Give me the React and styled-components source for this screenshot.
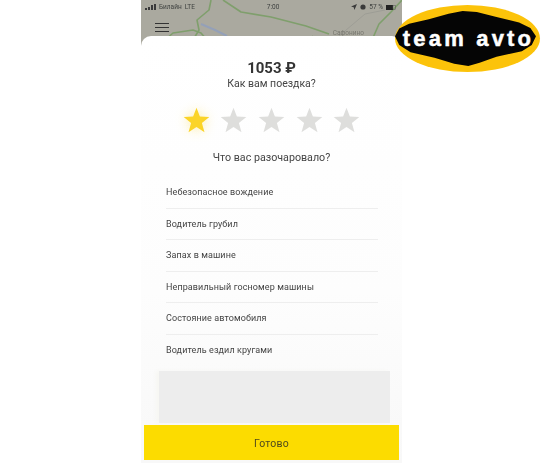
import React from 'react';
import styled, { createGlobalStyle } from 'styled-components';

const GlobalStyle = createGlobalStyle`
  html, body {
    margin: 0;
    padding: 0;
    background: #fff;
  }
  body {
    font-family: "Roboto", "Liberation Sans", sans-serif;
  }
`;

const Page = styled.div`
  position: relative;
  width: 543px;
  height: 463px;
  overflow: hidden;
  background: #fff;
`;

const Phone = styled.div`
  position: relative;
  margin-left: 141px;
  width: 261px;
  height: 463px;
  background: #aaa99f;
  overflow: hidden;
  filter: blur(0.35px);
`;

const MapLayer = styled.svg`
  position: absolute;
  top: 0;
  left: 0;
`;

const StatusBar = styled.div`
  position: relative;
  height: 14px;
  padding: 0 6px 0 4px;
  display: flex;
  align-items: center;
  justify-content: space-between;
  font-size: 6.5px;
  color: #3f4240;
`;

const StatusGroup = styled.div`
  display: flex;
  align-items: center;
  gap: 3px;
`;

const MenuRow = styled.div`
  position: relative;
  height: 22px;
  padding: 4px 0 0 14px;
  box-sizing: border-box;
  display: flex;
  align-items: flex-start;
  justify-content: space-between;
`;

const Burger = styled.div`
  margin-top: 5px;
  width: 14px;
  height: 9px;
  border-top: 1px solid #333;
  border-bottom: 1px solid #333;
  box-sizing: border-box;
  position: relative;
  &::after {
    content: '';
    position: absolute;
    left: 0;
    right: 0;
    top: 3px;
    height: 1px;
    background: #333;
  }
`;

const PlaceName = styled.span`
  margin: 12px 38px 0 0;
  font-size: 6.5px;
  line-height: 7px;
  color: #77776f;
`;

const Sheet = styled.div`
  position: relative;
  height: 427px;
  background: linear-gradient(#fff 0, #fdfdfd 60%, #f8f8f8 100%);
  border-radius: 10px 10px 0 0;
  display: flex;
  flex-direction: column;
  align-items: center;
`;

const Price = styled.div`
  margin-top: 23px;
  font-size: 15px;
  line-height: 18px;
  font-weight: 700;
  color: #333;
`;

const Question = styled.div`
  font-size: 10.5px;
  line-height: 13px;
  color: #444;
`;

const Stars = styled.div`
  margin-top: 16px;
  display: flex;
  gap: 11.6px;
`;

const StarIcon = styled.svg`
  width: 27px;
  height: 27px;
  margin: -0.5px;
  display: block;
  filter: ${({ $on }) => ($on ? 'drop-shadow(0 0 6px rgba(250, 215, 60, 0.45))' : 'none')};
  fill: ${({ $on }) => ($on ? '#fbd428' : '#dededc')};
`;

const Subtitle = styled.div`
  margin-top: 19px;
  font-size: 10.7px;
  line-height: 13px;
  color: #444;
`;

const List = styled.div`
  margin-top: 13px;
  width: 212px;
  margin-left: 1px;
`;

const Row = styled.div`
  height: 31.5px;
  box-sizing: border-box;
  display: flex;
  align-items: center;
  font-size: 9px;
  letter-spacing: 0.1px;
  color: #444;
  border-bottom: ${({ $last }) => ($last ? 'none' : '1px solid #eeeeee')};
`;

const CommentBox = styled.div`
  margin: 5px 0 0 6px;
  width: 231px;
  height: 52px;
  flex-shrink: 0;
  background: #ededed;
  box-shadow: -3px 0 4px #f6f6f2;
`;

const DoneButton = styled.button`
  margin-top: 2px;
  width: 255px;
  height: 35px;
  flex-shrink: 0;
  border: 0;
  padding: 2px 0 0;
  background: #fcdc00;
  font-family: inherit;
  font-size: 10.5px;
  letter-spacing: 0.2px;
  color: #4f4a1c;
`;

const Logo = styled.div`
  position: absolute;
  left: 395px;
  top: 5px;
  width: 145px;
  height: 67px;
  border-radius: 50%;
  background: #fcc30a;
`;

const LogoBadge = styled.div`
  position: absolute;
  left: 0;
  right: 4px;
  top: 6px;
  bottom: 6px;
  padding-left: 6px;
  background: #050505;
  clip-path: polygon(
    0 46%, 3% 32%, 10% 23%, 24% 15%, 38% 5%, 48% 0, 58% 2%, 72% 11%, 88% 21%, 96% 31%, 100% 46%,
    97% 62%, 90% 73%, 72% 83%, 60% 94%, 52% 100%, 42% 96%, 28% 85%, 11% 75%, 3% 62%
  );
  display: flex;
  align-items: center;
  justify-content: center;
  color: #fff;
  font-family: "Liberation Sans", Arial, sans-serif;
  font-weight: 700;
  font-size: 22px;
  letter-spacing: 3.2px;
  white-space: nowrap;
  -webkit-text-stroke: 0.5px #fff;
`;

const STARS = [true, false, false, false, false];

const REASONS = [
  'Небезопасное вождение',
  'Водитель грубил',
  'Запах в машине',
  'Неправильный госномер машины',
  'Состояние автомобиля',
  'Водитель ездил кругами',
];

const Star = ({ on }) => (
  <StarIcon $on={on} viewBox="0 0 24 24">
    <path d="M12 1.5l3 7.9 8.4.4-6.6 5.3 2.3 8.2L12 18.6l-7.1 4.7 2.3-8.2L.6 9.8 9 9.4z" />
  </StarIcon>
);

const RoadMap = () => (
  <MapLayer width="261" height="40" viewBox="0 0 261 40" fill="none">
    <g stroke="#7f9f6c" strokeWidth="1.6" strokeLinejoin="round">
      <path d="M70 0 L68 10 L56 20 L58 30 L52 40" />
      <path d="M24 40 L32 33 L52 30 L60 33 L66 40" />
      <path d="M82 0 L100 12 L130 17 L165 26 L188 34" />
      <path d="M231 40 L238 24 L250 12 L261 0" />
      <path d="M168 40 L172 36" />
    </g>
    <path d="M60 24 L74 30 L86 36" stroke="#94a0b8" strokeWidth="2" />
    <path d="M198 36 L224 14 L244 10" stroke="#989890" strokeWidth="0.7" />
  </MapLayer>
);

const SignalBars = () => (
  <svg width="11" height="6" viewBox="0 0 11 6" fill="#3a3a3a">
    <rect x="0" y="4" width="2" height="2" />
    <rect x="3" y="3" width="2" height="3" />
    <rect x="6" y="1" width="2" height="5" />
    <rect x="9" y="0" width="2" height="6" />
  </svg>
);

const StatusIcons = () => (
  <StatusGroup>
    <svg width="6" height="6" viewBox="0 0 6 6" fill="#3a3a3a">
      <path d="M6 0L0 2.6l2.7.7L3.4 6z" />
    </svg>
    <svg width="6" height="6" viewBox="0 0 6 6" fill="#3a3a3a">
      <circle cx="3" cy="3" r="2.6" />
    </svg>
    <span>57 %</span>
    <svg width="10" height="5" viewBox="0 0 10 5" fill="#222">
      <rect x="0" y="0" width="7" height="5" />
      <rect x="7" y="0.5" width="2.5" height="4" fill="none" stroke="#555" strokeWidth="0.5" />
    </svg>
  </StatusGroup>
);

export default function App() {
  return (
    <Page>
      <GlobalStyle />
      <Phone>
        <RoadMap />
        <StatusBar>
          <StatusGroup>
            <SignalBars />
            <span>Билайн</span>
            <span>LTE</span>
          </StatusGroup>
          <span>7:00</span>
          <StatusIcons />
        </StatusBar>
        <MenuRow>
          <Burger />
          <PlaceName>Сафонино</PlaceName>
        </MenuRow>
        <Sheet>
          <Price>1053 ₽</Price>
          <Question>Как вам поездка?</Question>
          <Stars>
            {STARS.map((on, i) => (
              <Star key={i} on={on} />
            ))}
          </Stars>
          <Subtitle>Что вас разочаровало?</Subtitle>
          <List>
            {REASONS.map((text, i) => (
              <Row key={text} $last={i === REASONS.length - 1}>
                {text}
              </Row>
            ))}
          </List>
          <CommentBox />
          <DoneButton>Готово</DoneButton>
        </Sheet>
      </Phone>
      <Logo>
        <LogoBadge>team avto</LogoBadge>
      </Logo>
    </Page>
  );
}
